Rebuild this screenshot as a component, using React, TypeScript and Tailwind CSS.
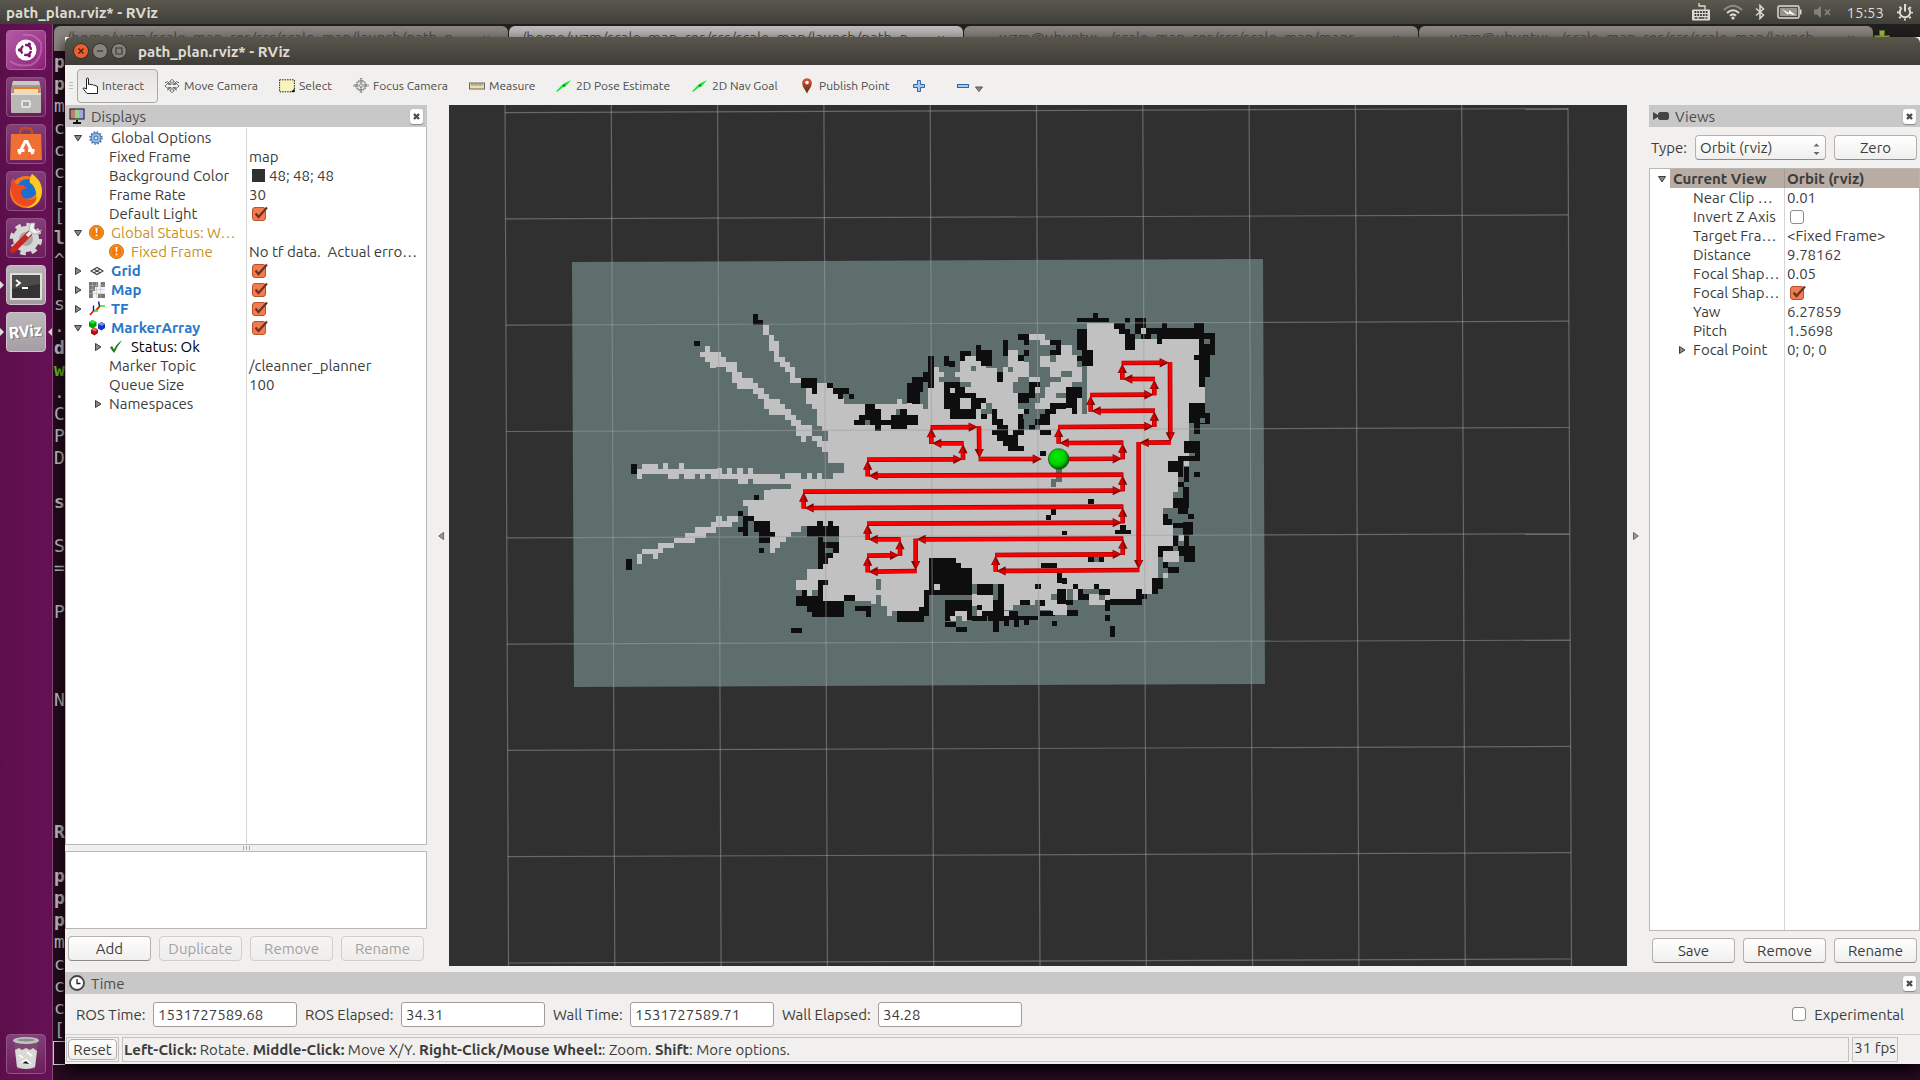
import React, { ReactNode } from "react";
import clsx from "clsx";

type Box = [number, number, number, number];

/* ---------- occupancy map, in thirds of a pixel ---------- */

const FREE_WEST = [
  "M489 105H507V136H522V152H537V200H555V215H570V231H585V263H603V279H570V247H555V231H540V215H522V183H507V136H489Z",
  "M315 168H330V185H363V200H378V215H411V247H426V263H459V279H474V295H492V311H507V327H540V342H555V358H572V374H588V390H603V406H636V438H666V453H684V486H666V470H652V453H636V438H618V455H603V438H588V408H572V390H555V374H507V358H492V327H474V311H459V297H411V279H396V247H378V231H348V234H330V215H315V200H300V186H315Z",
  "M111 537H126V521H173V537H189V519H204V537H237V519H252V537H351V534H366V551H381V534H396V551H411V534H429V551H444V534H459V551H540V567H555V550H603V566H620V550H636V566H652V550H666V566H690V582H492V582H459V567H444V582H459V582H414V567H333V551H316V566H300V551H285V566H252V551H237V566H222V551H204V567H222V551H126V567H111Z",
  "M618 293H651V279H684V293H699V309H714V325H732V342H891V327H906V342H921V327H960V963H876V978H861V947H843V942H813V933H669V900H636V917H620V900H588V870H620V837H669V821H684V805H699V790H717V708H603V725H573V740H558V756H540V773H525V788H510V740H525V725H510V693H462V678H444V647H429V630H492V600H514V597H573V582H573V567H699V549H732V519H684V423H666V408H652V358H636V342H618Z",
  "M111 793H126V777H173V760H222V744H255V728H285V712H333V697H348V678H366V693H381V678H414V697H396V712H348V728H318V744H285V760H222V773H189V790H173V806H160V793H126V821H111Z",
];

const BLACK_WEST_PATHS = [
  "M620 708H652V693H669V708H684V693H699V708H717V788H699V805H684V821H669V837H654V740H620Z",
  "M795 342H825V358H843V390H873V374H889V358H906V342H921V374H954V406H921V417H873V406H843V423H825V406H762V390H778V374H795Z",
  "M588 918H606V900H620V918H654V885H669V933H732V980H636V965H620V947H588Z",
  "M765 948H813V980H798V963H765Z",
];

const BLACK_WEST: Box[] = [
  [459, 72, 15, 32], [459, 90, 30, 14], [282, 153, 18, 15], [603, 264, 48, 29], [636, 279, 15, 32],
  [681, 279, 18, 14], [699, 294, 48, 17], [714, 311, 15, 15], [747, 312, 15, 15], [921, 279, 39, 48],
  [936, 262, 24, 80], [462, 615, 15, 15], [93, 522, 18, 30], [78, 807, 18, 32], [414, 663, 15, 15],
  [429, 678, 33, 15], [429, 693, 15, 45], [414, 710, 30, 15], [462, 693, 48, 32], [477, 725, 48, 16],
  [477, 741, 33, 18], [477, 773, 15, 16], [654, 870, 30, 15], [732, 915, 33, 18], [891, 963, 69, 33],
  [573, 1014, 33, 15],
];

const UNKNOWN_WEST: Box[] = [
  [669, 741, 48, 15], [676, 773, 24, 15], [828, 867, 15, 33], [828, 915, 15, 30], [795, 390, 15, 15],
  [889, 358, 32, 16],
];

const FREE_EAST = [
  "M0 342H69V356H85V247H102V231H117V247H133V262H149V230H165V212H196V198H243V228H259V235H291V276H308V231H323V180H355V198H372V215H388V260H420V308H404V324H435V292H450V276H483V260H435V230H420V198H450V215H467V195H483V165H515V195H531V230H546V372H561V100H642V117H657V130H675V180H705V147H897V195H882V210H897V290H915V340H867V500H835V520H805V545H835V605H820V655H790V705H820V770H775V865H757V912H740V927H708V945H566V930H519V944H500V960H501V975H453V960H405V945H340V960H311V990H263V978H216V963H216V914H88V914H73V950H57V963H0Z",
  "M387 132H435V149H450V165H420V149H387Z",
  "M149 978H165V963H200V992H185V978H168V992H153Z",
];

const UNKNOWN_EAST: Box[] = [
  [117, 262, 63, 14], [180, 276, 32, 14], [149, 230, 16, 34], [259, 340, 16, 32], [243, 356, 32, 16],
  [165, 212, 16, 34], [212, 228, 16, 14], [355, 260, 33, 48], [323, 230, 16, 16], [338, 276, 16, 32],
  [404, 308, 16, 30], [355, 338, 48, 20], [372, 388, 48, 32], [372, 404, 16, 16], [404, 356, 28, 16],
  [420, 276, 14, 16], [435, 244, 14, 32], [483, 244, 32, 16], [467, 308, 32, 16], [388, 180, 16, 34],
  [404, 165, 46, 31], [420, 230, 30, 14], [484, 340, 15, 16], [468, 537, 18, 30], [453, 567, 15, 24],
  [468, 565, 18, 12], [582, 801, 15, 15], [500, 897, 19, 48], [453, 912, 18, 17], [549, 897, 48, 15],
  [405, 930, 15, 30], [216, 882, 15, 30], [279, 882, 15, 48], [216, 947, 15, 30], [597, 912, 18, 18],
  [515, 276, 31, 16], [388, 356, 47, 32], [388, 324, 16, 32],
];

const BLACK_EAST_PATHS = [
  "M133 276H180V291H196V308H228V324H259V340H243V356H228V388H149V356H133Z",
  "M435 356H450V340H499V356H467V372H450V388H435V404H404V420H388V404H404V388H420V372H435Z",
  "M275 358H291V388H308V404H323V436H355V468H372V483H325V468H308V452H291V436H275V420H291V404H275Z",
  "M531 117H561V180H579V227H546V212H531V197H546V180H531Z",
  "M753 114H786V99H801V114H882V99H911V130H944V195H929V260H914V290H897V210H882V195H897V147H786V162H771V132H753Z",
  "M88 804H168V820H183V835H216V914H88Z",
  "M88 900H73V950H57V963H0V996H73V978H88Z",
  "M757 865H789V897H773V912H757Z",
  "M231 882H279V915H247V914H231Z",
  "M135 930H216V950H200V963H180V963H165V978H149V992H135Z",
  "M294 882H311V963H355V978H420V963H435V930H420V947H435V978H415V991H387V1005H372V991H357V1010H342V991H327V1008H311V992H297V1025H279V992H263V978H247V963H279V930H294Z",
];

const BLACK_EAST: Box[] = [
  [85, 198, 16, 95], [69, 245, 16, 32], [37, 262, 32, 45], [21, 279, 33, 60], [37, 310, 16, 32],
  [0, 358, 21, 60], [0, 374, 54, 30], [133, 198, 14, 30], [147, 214, 18, 17], [180, 183, 33, 15],
  [180, 198, 15, 14], [228, 165, 15, 34], [228, 180, 48, 32], [243, 212, 33, 16], [308, 150, 15, 48],
  [291, 247, 18, 29], [355, 132, 32, 17], [372, 149, 15, 16], [372, 180, 16, 18], [355, 196, 16, 16],
  [450, 149, 33, 15], [467, 164, 16, 30], [450, 180, 17, 15], [388, 276, 32, 16], [388, 292, 16, 32],
  [355, 308, 33, 32], [499, 292, 47, 32], [499, 324, 32, 30], [515, 354, 16, 18], [355, 372, 16, 64],
  [371, 358, 16, 14], [338, 420, 18, 14], [420, 388, 30, 16], [420, 420, 32, 15], [243, 372, 18, 15],
  [420, 483, 18, 14], [531, 85, 96, 12], [579, 69, 15, 16], [642, 100, 33, 17], [657, 117, 33, 15],
  [675, 85, 15, 15], [675, 132, 30, 47], [690, 147, 15, 15], [705, 85, 33, 30], [705, 115, 18, 17],
  [738, 115, 15, 32], [723, 132, 30, 14],
  [867, 340, 48, 60], [900, 370, 30, 33], [882, 400, 18, 32], [852, 453, 48, 35], [885, 453, 15, 60],
  [835, 498, 50, 15], [805, 513, 45, 33], [835, 540, 15, 22], [882, 546, 18, 14], [852, 530, 15, 46],
  [835, 577, 17, 15], [850, 592, 17, 48], [820, 625, 47, 30], [835, 655, 30, 17], [865, 672, 17, 14],
  [850, 695, 30, 40], [820, 700, 30, 15], [790, 672, 15, 32], [805, 687, 12, 17], [820, 735, 15, 32],
  [852, 735, 14, 35], [835, 768, 50, 30], [852, 798, 33, 17], [775, 768, 45, 14], [775, 782, 15, 18],
  [790, 815, 15, 20], [805, 830, 32, 18], [708, 897, 18, 48], [726, 912, 15, 15], [630, 927, 78, 17],
  [615, 930, 15, 33], [615, 975, 15, 18], [630, 1008, 15, 32], [564, 627, 18, 15], [453, 657, 15, 17],
  [438, 675, 15, 15], [486, 723, 15, 12], [645, 720, 48, 12], [660, 706, 17, 15], [564, 801, 18, 14],
  [597, 801, 15, 15], [423, 819, 48, 14], [471, 849, 15, 31], [485, 865, 16, 17], [471, 897, 28, 46],
  [499, 930, 20, 14], [519, 881, 15, 16], [534, 897, 15, 33], [549, 912, 17, 18], [582, 881, 15, 16],
  [597, 897, 32, 17], [405, 881, 18, 15], [231, 945, 15, 15], [200, 947, 16, 42], [216, 978, 45, 14],
  [135, 996, 33, 15], [168, 1011, 33, 14], [360, 930, 30, 15], [435, 963, 30, 15], [501, 960, 33, 17],
  [456, 993, 15, 15],
];

const FREE_SPOTS: Box[] = [
  [149, 293, 16, 16], [180, 325, 33, 32], [837, 735, 15, 17], [790, 782, 47, 33], [852, 513, 15, 15],
  [790, 848, 14, 15], [103, 882, 17, 17], [566, 930, 30, 15], [311, 963, 16, 14], [723, 115, 15, 16],
  [458, 945, 27, 30],
];

const UNKNOWN_SPOTS: Box[] = [[911, 147, 18, 15], [370, 372, 16, 16], [900, 385, 14, 15]];

/* planned route, same unit: from x, y to x, y */
const ROUTE: Box[] = [
  [803, 509, 1090, 508], [1568, 554, 803, 557], [611, 605, 1568, 602], [1568, 650, 611, 654],
  [803, 701, 1568, 698], [1568, 746, 947, 748], [900, 748, 803, 748], [803, 797, 900, 796],
  [948, 843, 803, 845], [803, 557, 803, 509], [611, 654, 611, 605], [803, 748, 803, 701],
  [900, 796, 900, 748], [803, 845, 803, 797], [947, 748, 947, 843],
  [994, 412, 1136, 411], [994, 460, 994, 412], [1089, 460, 994, 460], [1089, 508, 1089, 460],
  [1137, 411, 1138, 507], [1138, 507, 1328, 507], [1406, 507, 1568, 506], [1568, 506, 1568, 458],
  [1568, 458, 1376, 459], [1376, 459, 1376, 411], [1376, 411, 1663, 409], [1663, 409, 1663, 362],
  [1663, 362, 1472, 363], [1472, 363, 1472, 315], [1472, 315, 1663, 314], [1663, 314, 1663, 267],
  [1663, 267, 1567, 267], [1567, 267, 1567, 219], [1567, 219, 1709, 218], [1710, 218, 1711, 457],
  [1711, 457, 1616, 458], [1616, 458, 1616, 840], [1616, 840, 1187, 843], [1187, 843, 1187, 795],
  [1187, 795, 1568, 793], [1568, 793, 1569, 746], [1568, 698, 1568, 650], [1568, 602, 1568, 554],
];

function Boxes({ boxes, fill }: { boxes: Box[]; fill: string }) {
  return <path fill={fill} d={boxes.map(([x, y, w, h]) => `M${x} ${y}h${w}v${h}h${-w}z`).join("")} />;
}

function Arrow({ seg }: { seg: Box }) {
  const [x1, y1, x2, y2] = seg;
  const len = Math.hypot(x2 - x1, y2 - y1);
  const deg = (Math.atan2(y2 - y1, x2 - x1) * 180) / Math.PI;
  return (
    <g transform={`translate(${x1} ${y1}) rotate(${deg})`}>
      <rect x={-2} y={-7} width={len - 20} height={14} fill="#b00000" />
      <rect x={-2} y={-5} width={len - 20} height={9} fill="#fb0000" />
      <path d={`M${len - 30} -14L${len - 2} 0L${len - 30} 14Z`} fill="#8c0000" />
      <path d={`M${len - 29} -11L${len - 6} -1L${len - 29} 4Z`} fill="#d80000" />
    </g>
  );
}

const FREE = "#c1c1c1";
const WALL = "#0e0e0e";
const UNKNOWN = "#5e6e6c";

function Scene() {
  const n = [0, 1, 2, 3, 4, 5, 6, 7, 8, 9, 10];
  return (
    <svg
      role="img"
      aria-label="3D view: map with planned cleaning path"
      className="block h-full w-full bg-[#303030]"
      viewBox="449 105 1178 861"
      preserveAspectRatio="xMidYMid slice"
    >
      <defs>
        <radialGradient id="ball" cx="0.42" cy="0.38" r="0.62">
          <stop offset="0" stopColor="#00f000" />
          <stop offset="0.65" stopColor="#00cc00" />
          <stop offset="1" stopColor="#006000" />
        </radialGradient>
      </defs>
      <path d="M572 262L1263 259L1265 684L574 687Z" fill={UNKNOWN} />
      <g transform="translate(600 290) scale(0.33333)" shapeRendering="crispEdges">
        <path d={FREE_WEST.join("")} fill={FREE} />
        <Boxes boxes={UNKNOWN_WEST.slice(2, 4)} fill={UNKNOWN} />
        <path d={BLACK_WEST_PATHS.join("")} fill={WALL} />
        <Boxes boxes={BLACK_WEST} fill={WALL} />
        <Boxes boxes={UNKNOWN_WEST} fill={UNKNOWN} />
      </g>
      <g transform="translate(900 290) scale(0.33333)" shapeRendering="crispEdges">
        <path d={FREE_EAST.join("")} fill={FREE} />
        <Boxes boxes={UNKNOWN_EAST} fill={UNKNOWN} />
        <path d={BLACK_EAST_PATHS.join("")} fill={WALL} />
        <Boxes boxes={BLACK_EAST} fill={WALL} />
        <Boxes boxes={FREE_SPOTS} fill={FREE} />
        <Boxes boxes={UNKNOWN_SPOTS} fill={UNKNOWN} />
      </g>
      <g stroke="#a0a0a4" strokeOpacity="0.5" strokeWidth="1.2">
        {n.map((i) => (
          <line key={`v${i}`} x1={505 + i * 106.3} y1={i === 10 ? 108 : 105} x2={508.5 + i * 106.3} y2={966} />
        ))}
        {n.slice(0, 9).map((i) => (
          <line key={`h${i}`} x1={505 + i * 0.4} y1={112.6 + i * 106.3} x2={1568 + i * 0.4} y2={108.6 + i * 106.3} />
        ))}
      </g>
      <g transform="translate(600 290) scale(0.33333)">
        {ROUTE.map((seg) => (
          <Arrow key={seg.join()} seg={seg} />
        ))}
        <circle cx="1376" cy="507" r="31" fill="url(#ball)" stroke="#005000" strokeWidth="2" />
      </g>
    </svg>
  );
}

/* ---------- small parts ---------- */

function Tri({ open }: { open: boolean }) {
  return (
    <svg width="8" height="8" viewBox="0 0 8 8" aria-hidden="true">
      <path d={open ? "M.5 1.5h7L4 7z" : "M1.5.5v7L7 4z"} fill="#8a8a8a" stroke="#3c3c3c" strokeWidth="1" />
    </svg>
  );
}

function Check({ label, on }: { label: string; on: boolean }) {
  return (
    <span className="relative inline-flex">
      <input
        type="checkbox"
        aria-label={label}
        defaultChecked={on}
        className="peer m-0 size-[14px] appearance-none rounded-[3px] border border-[#8f8b86] bg-white checked:border-[#b8512d] checked:bg-[#f37b50]"
      />
      <svg className="pointer-events-none absolute -top-px left-0 hidden peer-checked:block" width="17" height="15" viewBox="0 0 17 15" aria-hidden="true">
        <path d="M3.5 7.5L6.500 11L15 1.500" fill="none" stroke="#6a3322" strokeWidth="2.200" />
      </svg>
    </span>
  );
}

function DockTitle({ icon, title }: { icon: ReactNode; title: string }) {
  return (
    <div className="flex h-[22px] shrink-0 items-center bg-[#c8c8c8] pr-1 pl-1">
      <span className="flex w-[22px] items-center">{icon}</span>
      <h2 className="flex-1 pt-px text-[#4c4c4c]">{title}</h2>
      <button aria-label={`Close ${title}`} className="flex h-[15px] w-[13px] items-center justify-center rounded-[3px] bg-white shadow-[0_1px_1px_#888]">
        <svg width="7" height="7" viewBox="0 0 7 7" aria-hidden="true">
          <path d="M1 1L6 6M6 1L1 6" stroke="#4a4a4a" strokeWidth="2.400" />
        </svg>
      </button>
    </div>
  );
}

function Btn({ children, disabled }: { children: ReactNode; disabled?: boolean }) {
  return (
    <button
      disabled={disabled}
      className="h-[25px] w-[83px] shrink-0 rounded-[4px] border border-[#b5b2ad] border-b-[#8f8c88] bg-linear-to-b from-white to-[#f0efee] text-[#3c3c3c] disabled:border-[#d0cecb] disabled:from-[#f6f5f4] disabled:to-[#eeedeb] disabled:text-[#a3a19e]"
    >
      {children}
    </button>
  );
}

const ICONS = {
  gear: (
    <svg width="16" height="14" viewBox="0 0 16 14" aria-hidden="true">
      <circle cx="7" cy="7" r="5" fill="#9cbde6" stroke="#3567a6" />
      <circle cx="7" cy="7" r="6" fill="none" stroke="#3f73b5" strokeWidth="1.500" strokeDasharray="1.6 1.54" />
      <circle cx="7" cy="7" r="2" fill="#dbe8f7" stroke="#3567a6" />
    </svg>
  ),
  warn: (
    <svg width="15" height="15" viewBox="0 0 15 15" aria-hidden="true">
      <circle cx="7.500" cy="7.500" r="7" fill="#f57900" stroke="#c86a10" />
      <circle cx="7.500" cy="7.500" r="5.800" fill="none" stroke="#fba24a" strokeWidth=".8" />
      <path d="M6.500 3h2l-.4 5h-1.200zM6.600 9.500h1.800v1.800h-1.800z" fill="#fff" />
    </svg>
  ),
  grid: (
    <svg width="16" height="16" viewBox="0 0 16 16" aria-hidden="true">
      <path d="M2 8L8 4.500L14 8L8 11.500ZM5 6.200L11 9.800M11 6.200L5 9.800" fill="none" stroke="#444" strokeWidth="1.100" />
    </svg>
  ),
  map: (
    <svg width="16" height="16" viewBox="0 0 16 16" aria-hidden="true">
      <path d="M0 0h16v16H0z" fill="#f4f4f4" />
      <path d="M0 0h9v5H6v4H4v7H0zM12 0h4v5h-4zM9 12h7v4H9z" fill="#777" />
      <path d="M0 3.500h16M0 7.500h16M0 11.500h16M3.500 0v16M7.500 0v16M11.500 0v16" stroke="#bbb" strokeWidth=".5" />
    </svg>
  ),
  tf: (
    <svg width="16" height="16" viewBox="0 0 16 16" aria-hidden="true">
      <path d="M5 10L11 5" stroke="#f0d020" strokeWidth="1.600" />
      <path d="M1 14L4.500 10M7.500 9L11 5" stroke="#f00000" strokeWidth="1.600" />
      <path d="M4.500 10H9M11 5H16" stroke="#20e020" strokeWidth="1.400" />
      <path d="M4.500 10V4.500M10.500 5L9.500 0.500" stroke="#1010e0" strokeWidth="1.400" />
    </svg>
  ),
  markers: (
    <svg width="16" height="16" viewBox="0 0 16 16" aria-hidden="true">
      <path d="M0 2L3.500 0L7.500 2V6L3.500 8.500L0 6.500Z" fill="#00a000" />
      <path d="M0 2L3.500 0L7.500 2L3.500 4Z" fill="#20f020" />
      <path d="M9 4L12.500 2L16 4V8L12.500 10.500L9 8.500Z" fill="#1038c0" />
      <path d="M9 4L12.500 2L16 4L12.500 6Z" fill="#7090f0" />
      <path d="M2 9.500L5.500 7.500L9 9.500V13L5.500 15.500L2 13.500Z" fill="#b01010" />
      <path d="M2 9.500L5.500 7.500L9 9.500L5.500 11.500Z" fill="#f06060" />
    </svg>
  ),
  ok: (
    <svg width="15" height="15" viewBox="0 0 15 15" aria-hidden="true">
      <path d="M1 8.500L3 7L5 10.500Q8 4 13 1.500Q8.500 6.500 5.500 13.500H4.500Z" fill="#1d7a24" />
    </svg>
  ),
};

type Row = {
  name: string;
  value?: string;
  check?: boolean;
  swatch?: boolean;
  depth: number;
  open?: boolean;
  icon?: keyof typeof ICONS;
  tone?: string;
};

const DISPLAY_ROWS: Row[] = [
  { name: "Global Options", depth: 0, open: true, icon: "gear" },
  { name: "Fixed Frame", value: "map", depth: 1 },
  { name: "Background Color", value: "48; 48; 48", swatch: true, depth: 1 },
  { name: "Frame Rate", value: "30", depth: 1 },
  { name: "Default Light", check: true, depth: 1 },
  { name: "Global Status: W…", depth: 0, open: true, icon: "warn", tone: "text-[#c8911e]" },
  { name: "Fixed Frame", value: "No tf data.  Actual erro…", depth: 1, icon: "warn", tone: "text-[#c8911e]" },
  { name: "Grid", check: true, depth: 0, open: false, icon: "grid", tone: "font-bold text-[#2a78c8]" },
  { name: "Map", check: true, depth: 0, open: false, icon: "map", tone: "font-bold text-[#2a78c8]" },
  { name: "TF", check: true, depth: 0, open: false, icon: "tf", tone: "font-bold text-[#2a78c8]" },
  { name: "MarkerArray", check: true, depth: 0, open: true, icon: "markers", tone: "font-bold text-[#2a78c8]" },
  { name: "Status: Ok", depth: 1, open: false, icon: "ok", tone: "text-black" },
  { name: "Marker Topic", value: "/cleanner_planner", depth: 1 },
  { name: "Queue Size", value: "100", depth: 1 },
  { name: "Namespaces", depth: 1, open: false },
];

function DisplayTree() {
  return (
    <div role="tree" aria-label="Displays" className="flex min-h-0 flex-1 flex-col border border-t-0 border-[#b9b7b4] bg-white pt-px">
      {DISPLAY_ROWS.map((r, i) => (
        <div role="treeitem" aria-expanded={r.open} key={i} className="flex h-[19px] shrink-0 items-center">
          <div className={clsx("flex h-full w-[181px] shrink-0 items-center border-r border-[#d6d6d6]", r.depth === 0 ? "pl-2" : "pl-7")}>
            <span className="flex w-[15px] shrink-0">{r.open !== undefined && <Tri open={r.open} />}</span>
            {r.icon && <span className="flex w-[22px] shrink-0">{ICONS[r.icon]}</span>}
            <span className={clsx("whitespace-pre", r.tone)}>{r.name}</span>
          </div>
          <div className="flex items-center pl-[2px] whitespace-pre">
            {r.check && <span className="flex pl-[3px]"><Check label={r.name} on /></span>}
            {r.swatch && <span className="mr-1 ml-[3px] size-[13px] bg-[#303030]" />}
            {r.value}
          </div>
        </div>
      ))}
      <div className="w-[181px] flex-1 border-r border-[#d6d6d6]" />
    </div>
  );
}

const VIEW_ROWS: { name: string; value?: string; check?: boolean; tree?: boolean }[] = [
  { name: "Near Clip …", value: "0.01" },
  { name: "Invert Z Axis", check: false },
  { name: "Target Fra…", value: "<Fixed Frame>" },
  { name: "Distance", value: "9.78162" },
  { name: "Focal Shap…", value: "0.05" },
  { name: "Focal Shap…", check: true },
  { name: "Yaw", value: "6.27859" },
  { name: "Pitch", value: "1.5698" },
  { name: "Focal Point", value: "0; 0; 0", tree: true },
];

function ViewTree() {
  return (
    <div role="tree" aria-label="Current view" className="flex min-h-0 flex-1 flex-col border border-[#b9b7b4] bg-white">
      <div role="treeitem" aria-expanded className="flex h-[19px] shrink-0 items-center font-bold">
        <span className="flex w-5 shrink-0 pl-2"><Tri open /></span>
        <span className="h-full w-[115px] shrink-0 border-r border-[#a89a90] bg-[#b9aca3] pl-[3px] leading-5">Current View</span>
        <span className="h-full flex-1 bg-[#b9aca3] pl-[2px] leading-5">Orbit (rviz)</span>
      </div>
      {VIEW_ROWS.map((r, i) => (
        <div role="treeitem" key={i} className="flex h-[19px] shrink-0 items-center">
          <div className="flex h-full w-[135px] shrink-0 items-center border-r border-[#d6d6d6] pl-7">
            <span className="flex w-[15px] shrink-0">{r.tree && <Tri open={false} />}</span>
            <span className="whitespace-nowrap">{r.name}</span>
          </div>
          <div className="flex items-center pl-[2px]">
            {r.check !== undefined && <span className="flex pl-[3px]"><Check label={r.name} on={r.check} /></span>}
            {r.value}
          </div>
        </div>
      ))}
      <div className="w-[135px] flex-1 border-r border-[#d6d6d6]" />
    </div>
  );
}

/* ---------- toolbar ---------- */

const poseIcon = (
  <svg width="17" height="14" viewBox="0 0 17 14" aria-hidden="true">
    <path d="M0 12.500L7 5.500L8 4.500L16 .5L10 7.500L7 8.500L1.500 13Z" fill="#10e830" />
    <path d="M7 7L9.500 5L9 7.500Z" fill="#055c10" />
  </svg>
);

const TOOLS: { label: string; cls: string; icon: ReactNode }[] = [
  {
    label: "Move Camera",
    cls: "w-[115px]",
    icon: (
      <svg width="17" height="16" viewBox="0 0 17 16" aria-hidden="true">
        <path d="M8.500 .8L11 3.500H9.500V6.500H12.500V5L16 8L12.500 11V9.500H9.500V12.500H11L8.500 15.200L6 12.500H7.500V9.500H4.500V11L1 8L4.500 5V6.500H7.500V3.500H6Z" fill="#fafafa" stroke="#555" strokeWidth=".9" />
        <path d="M1 4.500L4 3.500L6.500 6M16 4.500L13 3.500L10.500 6M3.500 12.500L6.500 10M13.500 12.500L10.500 10" fill="none" stroke="#555" />
      </svg>
    ),
  },
  {
    label: "Select",
    cls: "w-[74px]",
    icon: (
      <svg width="16" height="14" viewBox="0 0 16 14" aria-hidden="true">
        <rect x=".6" y=".8" width="14.800" height="12" fill="#fbf3bd" stroke="#222" strokeDasharray="1.500 1" />
        <path d="M15.500 9.500V13H12Z" fill="#111" />
      </svg>
    ),
  },
  {
    label: "Focus Camera",
    cls: "w-[116px]",
    icon: (
      <svg width="17" height="17" viewBox="0 0 17 17" aria-hidden="true">
        <circle cx="8.500" cy="8.500" r="5" fill="none" stroke="#8a8a8a" strokeWidth="2" strokeDasharray="1.600 .6" />
        <path d="M8.500 .5V7M8.500 10V16.500M.5 8.500H7M10 8.500H16.500" stroke="#8a8a8a" strokeWidth="2.400" strokeDasharray="1.300 .6" />
        <circle cx="8.500" cy="8.500" r="1.500" fill="#eee" stroke="#999" />
      </svg>
    ),
  },
  {
    label: "Measure",
    cls: "w-[87px]",
    icon: (
      <svg width="16" height="8" viewBox="0 0 16 8" aria-hidden="true">
        <rect x=".5" y="1" width="15" height="6" fill="#eadfa6" stroke="#666" />
        <path d="M3 1.500V4M5 1.500V3.500M7 1.500V4M9 1.500V3.500M11 1.500V4M13 1.500V3.500" stroke="#666" strokeWidth=".8" />
      </svg>
    ),
  },
  { label: "2D Pose Estimate", cls: "w-[136px]", icon: poseIcon },
  { label: "2D Nav Goal", cls: "w-[107px]", icon: poseIcon },
  {
    label: "Publish Point",
    cls: "w-[112px]",
    icon: (
      <svg width="16" height="16" viewBox="0 0 16 16" aria-hidden="true">
        <defs>
          <linearGradient id="pin" x1="0" y1="0" x2="0" y2="1">
            <stop offset="0" stopColor="#e4553a" />
            <stop offset="1" stopColor="#4c2a12" />
          </linearGradient>
        </defs>
        <path d="M8 15.800C7 12 3.200 9.500 3.200 5A4.800 4.800 0 0 1 12.800 5C12.800 9.500 9 12 8 15.800Z" fill="url(#pin)" />
        <circle cx="8" cy="4.600" r="1.800" fill="#fff" />
      </svg>
    ),
  },
];

function Toolbar() {
  return (
    <div role="toolbar" aria-label="Tools" className="flex h-10 shrink-0 items-center pt-px pl-1 text-xs text-[#4a4a4a]">
      <span className="flex w-2 flex-col gap-[2px]">
        <i className="h-px w-1 bg-[#bbb]" />
        <i className="h-px w-1 bg-[#bbb]" />
        <i className="h-px w-1 bg-[#bbb]" />
      </span>
      <button aria-pressed className="mr-[6px] flex h-[34px] w-[81px] items-center gap-[3px] rounded-[4px] border border-[#aaa7a3] bg-linear-to-b from-[#e4e3e1] to-[#f2f1f0] pt-px pl-1">
        <svg width="17" height="18" viewBox="0 0 17 18" aria-hidden="true">
          <path d="M4.500 12V2Q4.500 1 5.500 1T6.500 2V7.500Q8 6.500 9 7.800Q10.500 7 11.500 8.300Q13 7.500 14 9Q15.500 8.800 15.500 10V16.500H5L1 11.500Q1.500 10 4.500 12Z" fill="#fff" stroke="#222" />
        </svg>
        Interact
      </button>
      {TOOLS.map((t) => (
        <button key={t.label} className={clsx("flex h-[34px] shrink-0 items-center gap-1 whitespace-nowrap", t.cls)}>
          <span className="flex w-4 shrink-0 justify-center">{t.icon}</span>
          {t.label}
        </button>
      ))}
      <button aria-label="Add tool" className="flex w-[44px]">
        <svg width="16" height="14" viewBox="0 0 16 14" aria-hidden="true">
          <path d="M6.500 1.500h3v4h4v3h-4v4h-3v-4h-4v-3h4z" fill="#a9c8ee" stroke="#2f65ad" />
        </svg>
      </button>
      <button aria-label="Remove tool" className="flex items-end gap-1">
        <svg width="16" height="14" viewBox="0 0 16 14" aria-hidden="true">
          <rect x="2.500" y="5.500" width="11" height="3" fill="#a9c8ee" stroke="#2f65ad" />
        </svg>
        <svg width="8" height="8" viewBox="0 0 8 8" aria-hidden="true">
          <path d="M.5 2h7L4 6.500z" fill="#8a8a8a" stroke="#555" />
        </svg>
      </button>
    </div>
  );
}

/* ---------- launcher ---------- */

function Tile({ label, cls, marks, children }: { label: string; cls: string; marks?: "run" | "focus"; children: ReactNode }) {
  return (
    <button aria-label={label} className="relative flex h-10 w-full items-center justify-center">
      {marks && (
        <svg className="absolute left-0" width="4" height="8" viewBox="0 0 4 8" aria-hidden="true">
          <path d="M0 0L4 4L0 8Z" fill="#ddd" />
        </svg>
      )}
      {marks === "focus" && (
        <svg className="absolute right-0" width="4" height="8" viewBox="0 0 4 8" aria-hidden="true">
          <path d="M4 0L0 4L4 8Z" fill="#ddd" />
        </svg>
      )}
      <span className={clsx("flex size-10 items-center justify-center rounded-[4px] border", cls)}>
        <svg width="38" height="38" viewBox="0 0 38 38" aria-hidden="true">{children}</svg>
      </span>
    </button>
  );
}

const PLAIN = "border-[#8f5482] bg-linear-to-b from-[#84407a] to-[#6c1d5c]";

function Launcher() {
  return (
    <nav aria-label="Launcher" className="flex w-[53px] shrink-0 flex-col gap-[7px] border-r border-[#864c78] bg-linear-to-r from-[#5c0e4b] to-[#671256] pt-[6px] pb-[6px]">
      <Tile label="Search" cls="border-[#b065a2] bg-linear-to-br from-[#b35aa6] to-[#8c1f78]">
        <path d="M3 30Q10 36 24 34Q36 28 34 12Q28 2 16 4" fill="none" stroke="#c889c0" strokeWidth="2" opacity=".5" />
        <circle cx="19" cy="19" r="10.500" fill="#fff" />
        <circle cx="19" cy="19" r="5" fill="none" stroke="#7d1a6b" strokeWidth="2.400" strokeDasharray="8.500 2" strokeDashoffset="-1" />
        <circle cx="12.500" cy="19" r="1.700" fill="#7d1a6b" />
        <circle cx="22.300" cy="13.200" r="1.700" fill="#7d1a6b" />
        <circle cx="22.300" cy="24.800" r="1.700" fill="#7d1a6b" />
      </Tile>
      <Tile label="Files" cls={PLAIN}>
        <path d="M6 3h26l2 8v4H4v-4z" fill="#9c9c98" />
        <path d="M6 3h26l1 4H5z" fill="#c9c9c5" />
        <path d="M6 9h26v7H6z" fill="#e8752c" />
        <path d="M7 11h24v5H7z" fill="#f5dca8" />
        <path d="M4 15h30v19q0 1-1 1H5q-1 0-1-1z" fill="#b9b8b4" />
        <path d="M4 15h30v2H4z" fill="#dddcd8" />
        <rect x="15" y="23" width="8" height="6" rx="1" fill="#aaa" stroke="#f2f2f2" strokeWidth="1.500" />
      </Tile>
      <Tile label="Software" cls={PLAIN}>
        <path d="M13 12V7q0-4 6-4t6 4v5" fill="none" stroke="#c04c22" strokeWidth="2.500" />
        <path d="M4 9h30l1 26H3z" fill="#ef6f35" />
        <path d="M12 29L18 16.500h2L26 29M10.500 25.500h7M21 25.500h6.500" fill="none" stroke="#fff" strokeWidth="3" />
      </Tile>
      <Tile label="Firefox" cls={PLAIN}>
        <circle cx="19" cy="20" r="16" fill="#f5761d" />
        <circle cx="20" cy="17" r="10" fill="#1c6fd0" />
        <path d="M25 2Q37 10 34.500 23Q31 36 19 36Q33 30 28 17Q26 12 23 11Q22 6 25 2Z" fill="#fdc726" />
        <path d="M4 9Q2 30 17 34Q28 35 30 25Q24 30 17 26Q12 22 15 18L20 16Q16 12 12 13Q7 12 7 6Q5 7 4 9Z" fill="#ee4a22" />
      </Tile>
      <Tile label="System Settings" cls={PLAIN}>
        <circle cx="19" cy="20" r="13" fill="#d6d6d4" />
        <circle cx="19" cy="20" r="14.200" fill="none" stroke="#d6d6d4" strokeWidth="4" strokeDasharray="5.600 5.550" />
        <circle cx="19" cy="20" r="7" fill="#a9a5a8" />
        <path d="M6 31L22 15" stroke="#c6281f" strokeWidth="6" strokeLinecap="round" />
        <path d="M20 17L25 12" stroke="#e8e8e8" strokeWidth="3.500" />
        <path d="M24 4Q20 10 25 14Q30 17 35 11L30 12L27 9L28 4Z" fill="#efefef" stroke="#999" strokeWidth=".7" />
      </Tile>
      <Tile label="Terminal" marks="run" cls="border-[#c9c2c8] bg-linear-to-b from-[#b9b4b8] to-[#a39ba2]">
        <rect x="3" y="7" width="32" height="27" rx="1" fill="#e2e0dc" />
        <rect x="5" y="9" width="28" height="23" fill="#333431" />
        <path d="M5 9h28v9L5 23z" fill="#4b4c49" />
        <path d="M9 14L13 17L9 20M15 22H21" fill="none" stroke="#fff" strokeWidth="1.800" />
      </Tile>
      <Tile label="RViz" marks="focus" cls="border-[#cbc4ca] bg-linear-to-b from-[#bdb8bc] to-[#a59fa5]">
        <text x="3" y="25" fontFamily="Roboto, sans-serif" fontWeight="700" fontSize="16" fill="#777" transform="rotate(-6 19 19)">RViz</text>
        <text x="2" y="24" fontFamily="Roboto, sans-serif" fontWeight="700" fontSize="16" fill="#fff" transform="rotate(-6 19 19)">RViz</text>
      </Tile>
      <div className="flex-1" />
      <Tile label="Trash" cls={PLAIN}>
        <path d="M7 6h24l-3 28H10z" fill="#7d4a74" />
        <path d="M8 15l4-2 3 2 4-2 4 2 3-2 4 3-2 16q-9 4-18 0z" fill="#d9d9d7" />
        <path d="M12 20l4 3M20 17l5 4M14 28l5-3 5 4" stroke="#fafafa" strokeWidth="2" />
        <ellipse cx="19" cy="5.500" rx="13" ry="3.500" fill="#c4c4c2" />
        <ellipse cx="19" cy="5" rx="9" ry="1.500" fill="#8b8b88" />
      </Tile>
    </nav>
  );
}

/* ---------- desktop ---------- */

function TopBar() {
  return (
    <header className="z-10 flex h-6 shrink-0 items-center bg-linear-to-b from-[#5b584e] to-[#3f3e39] px-[6px] text-[#dfdbd2]">
      <span className="flex-1 font-bold">path_plan.rviz* - RViz</span>
      <div className="flex items-center">
        <svg className="mr-3" width="20" height="20" viewBox="0 0 20 20" aria-hidden="true">
          <path d="M8 1v3h6v4" fill="none" stroke="#dfdbd2" strokeWidth="1.300" />
          <rect x="1" y="7.500" width="18" height="11" rx="1" fill="#dfdbd2" />
          <path d="M3.500 10h13M3.500 13h13" stroke="#3c3b37" strokeWidth="1.800" strokeDasharray="1.800 1" />
          <path d="M3.500 16h13" stroke="#3c3b37" strokeWidth="1.500" strokeDasharray="3 1 6 1" />
        </svg>
        <svg className="mr-3" width="20" height="16" viewBox="0 0 20 16" aria-hidden="true">
          <path d="M1 6Q10 -2.500 19 6" fill="none" stroke="#8e8b83" strokeWidth="2" />
          <path d="M4 9Q10 3.500 16 9M7 11.800Q10 9 13 11.800" fill="none" stroke="#dfdbd2" strokeWidth="2" />
          <circle cx="10" cy="14" r="1.600" fill="#dfdbd2" />
        </svg>
        <svg className="mr-3" width="10" height="16" viewBox="0 0 10 16" aria-hidden="true">
          <path d="M1 4.500L8.500 11L5 14.500V1.500L8.500 5L1 11.500" fill="none" stroke="#dfdbd2" strokeWidth="1.500" />
        </svg>
        <svg className="mr-3" width="25" height="14" viewBox="0 0 25 14" aria-hidden="true">
          <rect x="1" y="1" width="21" height="12" rx="1.500" fill="none" stroke="#dfdbd2" strokeWidth="1.500" />
          <rect x="3" y="3" width="17" height="8" fill="#96938a" />
          <path d="M23 4.500h1.500v5H23" fill="#dfdbd2" />
          <path d="M5 4L12 8V5L19 10.500L11 8.500V10Z" fill="#fff" />
        </svg>
        <svg className="mr-[14px]" width="18" height="12" viewBox="0 0 18 12" aria-hidden="true">
          <path d="M0 3.500h3L7 0v12L3 8.500H0z" fill="#85827a" />
          <path d="M11 3.500L16 9M16 3.500L11 9" stroke="#85827a" strokeWidth="1.800" />
        </svg>
        <time className="mr-3">15:53</time>
        <svg width="18" height="18" viewBox="0 0 18 18" aria-hidden="true">
          <circle cx="9" cy="9.500" r="7" fill="none" stroke="#dfdbd2" strokeWidth="2" strokeDasharray="2 3.500" strokeDashoffset="1" />
          <path d="M12.200 5A5.200 5.200 0 1 1 5.800 5M9 1V8.500" fill="none" stroke="#dfdbd2" strokeWidth="2" />
        </svg>
      </div>
    </header>
  );
}

const TERMINAL_LINES: [string, string?][] = [
  ["p", "b"], ["p", "b"], ["m"], ["c"], ["c"], ["c"], ["["], ["["], ["l", "b"], ["^"], ["["], ["s"], ["."],
  ["d", "b"], ["w", "g"], ["."], ["C"], ["P"], ["D"], [""], ["s", "b"], [""], ["S"], ["="], [""], ["P"],
  [""], [""], [""], ["N"], [""], [""], [""], [""], [""], ["R", "b"], [""], ["p", "b"], ["p", "b"], ["p", "b"],
  ["m"], ["c"], ["c"], ["c"], ["["],
];

const TABS = [
  { text: "/home/wzm/scale_map_ros/src/scale_map/launch/path_p…", active: false },
  { text: "/home/wzm/scale_map_ros/src/scale_map/launch/path_p…", active: true },
  { text: "wzm@ubuntu: ~/scale_map_ros/src/scale_map/maps", active: false },
  { text: "wzm@ubuntu: ~/scale_map_ros/src/scale_map/launch", active: false },
];

function TerminalWindow() {
  return (
    <section aria-label="Terminal" className="flex h-full flex-col overflow-hidden bg-linear-to-b from-[#250a1e] to-[#2a0a21]">
      <div className="flex h-[27px] shrink-0 bg-[#21201e] pt-[2px] pl-px">
        {TABS.map((t, i) => (
          <button
            key={i}
            className={clsx(
              "mr-px flex min-w-0 flex-1 items-start rounded-t-[6px] px-2 pt-[2px] text-[#55524d]",
              t.active ? "bg-[#bebdbb]" : "bg-[#8c8782]",
            )}
          >
            <span className="min-w-0 flex-1 overflow-hidden text-center whitespace-nowrap">{t.text}</span>
            <span className="w-7 text-center">×</span>
          </button>
        ))}
        <div className="flex w-[46px] gap-3 pt-1">
          <svg width="16" height="16" viewBox="0 0 16 16" aria-hidden="true">
            <path d="M5.500 .5h5v5h5v5h-5v5h-5v-5h-5v-5h5z" fill="#a8c04a" stroke="#5d7a1e" />
          </svg>
        </div>
      </div>
      <div className="flex flex-col pl-px font-['DejaVu_Sans_Mono','Liberation_Mono',monospace] text-lg leading-[22px] text-[#cfc9cc]">
        {TERMINAL_LINES.map(([ch, tone], i) => (
          <span key={i} className={clsx("h-[22px]", tone && "font-bold", tone === "g" && "text-[#72c01c]")}>
            {ch}
          </span>
        ))}
      </div>
      <div className="h-6 w-3 border border-r-0 border-[#ddd]" />
    </section>
  );
}

const TIMES: [string, string, string][] = [
  ["ros-time", "ROS Time:", "1531727589.68"],
  ["ros-elapsed", "ROS Elapsed:", "34.31"],
  ["wall-time", "Wall Time:", "1531727589.71"],
  ["wall-elapsed", "Wall Elapsed:", "34.28"],
];

function RVizWindow() {
  return (
    <main className="absolute top-[13px] right-0 bottom-4 left-3 flex flex-col bg-[#f1f0ee] shadow-[0_6px_16px_#000]">
      <div className="flex h-7 shrink-0 items-center gap-[3px] rounded-t-[6px] bg-linear-to-b from-[#59564c] to-[#3d3c38] pl-2 text-[#dfdbd2]">
        <button aria-label="Close" className="flex size-4 items-center justify-center rounded-full border border-[#33322e] bg-[#ec5f33]">
          <svg width="8" height="8" viewBox="0 0 8 8" aria-hidden="true"><path d="M1.500 1.500L6.500 6.500M6.500 1.500L1.500 6.500" stroke="#4a2013" strokeWidth="1.300" /></svg>
        </button>
        <button aria-label="Minimize" className="flex size-4 items-center justify-center rounded-full border border-[#33322e] bg-[#85837b]">
          <svg width="8" height="8" viewBox="0 0 8 8" aria-hidden="true"><path d="M1 4H7" stroke="#3c3b37" strokeWidth="1.300" /></svg>
        </button>
        <button aria-label="Maximize" className="flex size-4 items-center justify-center rounded-full border border-[#33322e] bg-[#85837b]">
          <svg width="8" height="8" viewBox="0 0 8 8" aria-hidden="true"><path d="M1 1H7V7H1Z" fill="none" stroke="#3c3b37" strokeWidth="1.200" /></svg>
        </button>
        <h1 className="pt-px pl-2 font-bold">path_plan.rviz* - RViz</h1>
      </div>
      <Toolbar />

      <div className="flex min-h-0 flex-1">
        <section aria-label="Displays" className="flex w-[362px] shrink-0 flex-col">
          <DockTitle
            title="Displays"
            icon={
              <svg width="16" height="16" viewBox="0 0 16 16" aria-hidden="true">
                <rect x=".5" y=".5" width="15" height="11" fill="#111" />
                <path d="M1.500 1.500h4.500v9H1.500z" fill="#c47878" />
                <path d="M6 1.500h4v9H6z" fill="#8fd48f" />
                <path d="M10 1.500h4.500v9H10z" fill="#a5a5e8" />
                <path d="M7 12h2v2h3v2H4v-2h3z" fill="#111" />
              </svg>
            }
          />
          <DisplayTree />
          <div className="flex h-[6px] items-center justify-center gap-[2px]">
            <i className="h-1 w-px bg-[#aaa]" />
            <i className="h-1 w-px bg-[#aaa]" />
            <i className="h-1 w-px bg-[#aaa]" />
          </div>
          <div className="h-[78px] shrink-0 border border-[#b9b7b4] bg-white" />
          <div className="flex gap-2 pt-[7px] pb-[11px] pl-[3px]">
            <Btn>Add</Btn>
            <Btn disabled>Duplicate</Btn>
            <Btn disabled>Remove</Btn>
            <Btn disabled>Rename</Btn>
          </div>
        </section>

        <button aria-label="Hide left dock" className="flex w-[22px] shrink-0 items-center justify-end pr-[5px] pb-[6px]">
          <svg width="6" height="8" viewBox="0 0 6 8" aria-hidden="true"><path d="M5.500 .5V7.500L.8 4Z" fill="#999" stroke="#666" /></svg>
        </button>
        <div className="mb-[6px] min-w-0 flex-1"><Scene /></div>
        <button aria-label="Hide right dock" className="flex w-[22px] shrink-0 items-center justify-start pb-[6px] pl-[6px]">
          <svg width="6" height="8" viewBox="0 0 6 8" aria-hidden="true"><path d="M.5 .5V7.500L5.200 4Z" fill="#999" stroke="#666" /></svg>
        </button>

        <section aria-label="Views" className="flex w-[271px] shrink-0 flex-col">
          <DockTitle
            title="Views"
            icon={
              <svg width="16" height="10" viewBox="0 0 16 10" aria-hidden="true">
                <path d="M0 1L5 4V6L0 9Z" fill="#444" />
                <rect x="5" y="1" width="11" height="8" rx="2.500" fill="#444" />
              </svg>
            }
          />
          <div className="flex h-[41px] items-center gap-2 pr-[3px] pb-px pl-[2px]">
            <label htmlFor="view-type" className="w-9">Type:</label>
            <span className="relative flex flex-1">
              <select
                id="view-type"
                className="h-[25px] w-full appearance-none rounded-[4px] border border-[#b5b2ad] border-b-[#8f8c88] bg-linear-to-b from-white to-[#f0efee] pl-1 text-[#3c3c3c]"
              >
                <option>Orbit (rviz)</option>
              </select>
              <svg className="pointer-events-none absolute top-2 right-[6px]" width="7" height="12" viewBox="0 0 7 12" aria-hidden="true">
                <path d="M.5 3.500L3.500 .5L6.500 3.500ZM.5 9L3.500 12L6.500 9Z" fill="#666" />
              </svg>
            </span>
            <Btn>Zero</Btn>
          </div>
          <ViewTree />
          <div className="flex gap-2 pt-[7px] pb-[9px] pl-[3px]">
            <Btn>Save</Btn>
            <Btn>Remove</Btn>
            <Btn>Rename</Btn>
          </div>
        </section>
      </div>

      <section aria-label="Time" className="shrink-0">
        <DockTitle
          title="Time"
          icon={
            <svg width="16" height="16" viewBox="0 0 16 16" aria-hidden="true">
              <circle cx="8" cy="8" r="7" fill="#fff" stroke="#444" strokeWidth="1.800" />
              <path d="M8 4V8.500H11.500" fill="none" stroke="#222" strokeWidth="1.300" />
            </svg>
          }
        />
        <div className="flex h-10 items-center gap-2 pr-4 pl-[11px]">
          {TIMES.map(([id, label, value], i) => (
            <React.Fragment key={id}>
              <label htmlFor={id} className={clsx("shrink-0 whitespace-nowrap", i % 2 === 0 ? "w-[69px]" : "w-[88px]")}>{label}</label>
              <input id={id} readOnly defaultValue={value} className="h-[25px] w-[144px] rounded-[3px] border border-[#a09d99] bg-white px-1 text-[#3c3c3c]" />
            </React.Fragment>
          ))}
          <div className="flex-1" />
          <label className="flex items-center gap-2">
            <Check label="Experimental" on={false} />
            Experimental
          </label>
        </div>
      </section>

      <footer className="flex h-[30px] shrink-0 gap-[3px] border-t border-[#d0cecb] px-px py-[2px]">
        <div className="border border-[#c4c2bf] p-px">
          <button className="h-full w-[49px] rounded-[4px] border border-[#b5b2ad] bg-linear-to-b from-white to-[#f0efee]">Reset</button>
        </div>
        <p className="flex-1 border border-[#c4c2bf] pl-px leading-6 whitespace-nowrap">
          <b>Left-Click:</b> Rotate. <b>Middle-Click:</b> Move X/Y. <b>Right-Click/Mouse Wheel:</b>: Zoom. <b>Shift</b>: More options.
        </p>
        <div className="mr-[21px] w-[46px] border border-[#c4c2bf] text-center whitespace-nowrap">31 fps</div>
      </footer>
    </main>
  );
}

export default function App() {
  return (
    <div className="flex h-screen flex-col overflow-hidden bg-[#2a0a21] font-['Ubuntu','Noto_Sans',sans-serif] text-[15px] leading-[19px] text-[#3c3c3c]">
      <TopBar />
      <div className="flex min-h-0 flex-1">
        <Launcher />
        <div className="relative min-w-0 flex-1">
          <TerminalWindow />
          <RVizWindow />
        </div>
      </div>
    </div>
  );
}
